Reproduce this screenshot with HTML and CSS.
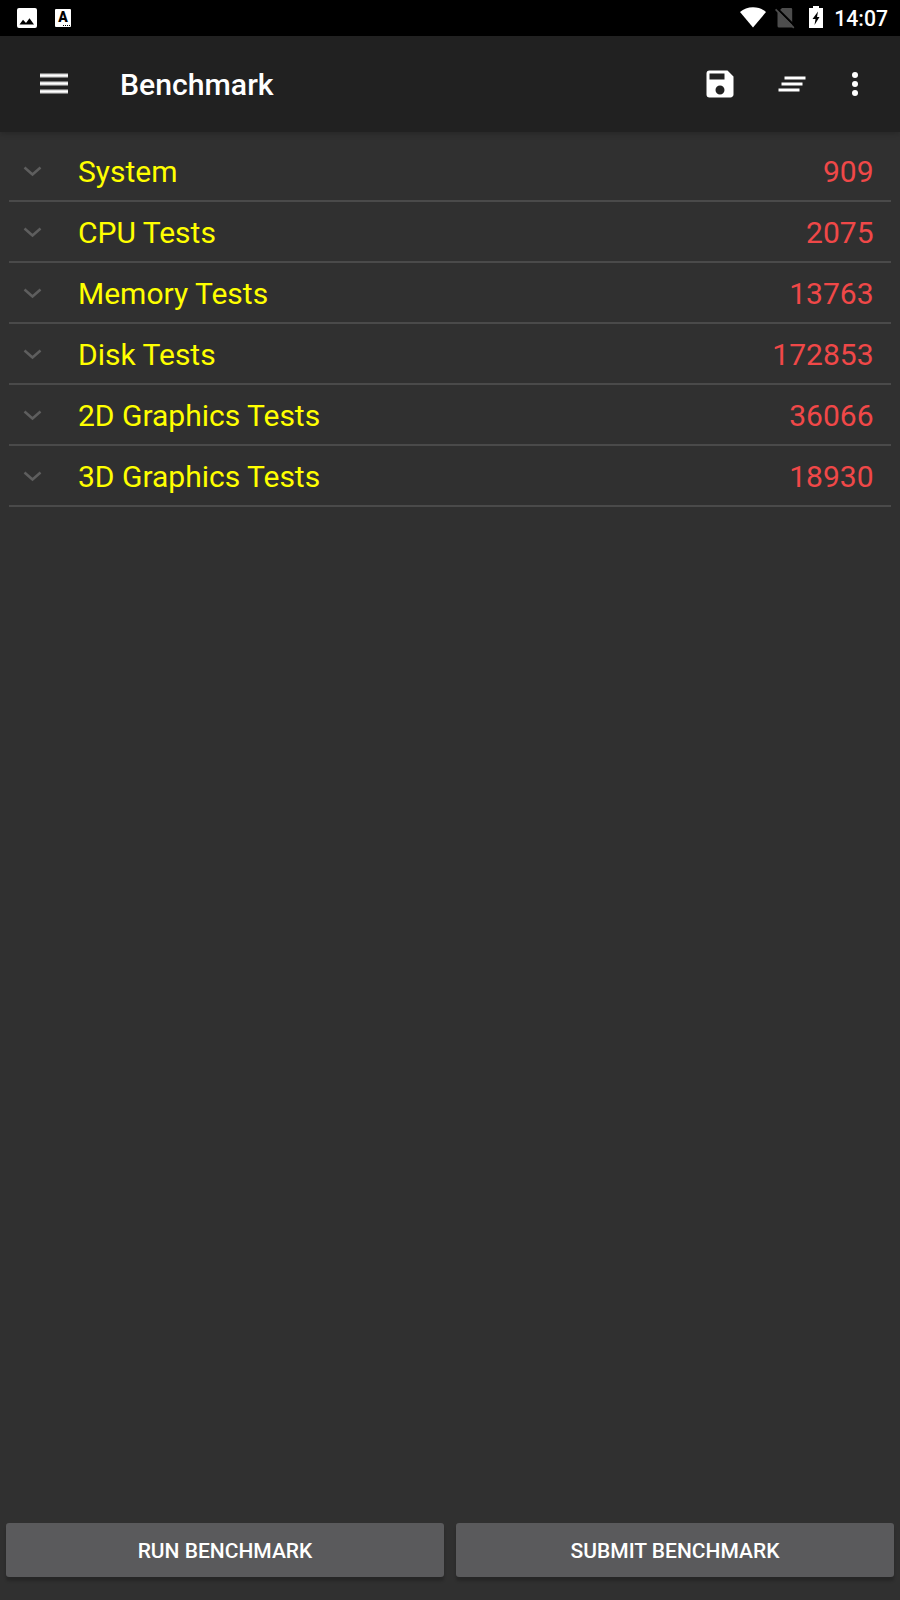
FILE: index.html
```html
<!DOCTYPE html>
<html lang="en">
<head>
  <meta charset="UTF-8">
  <meta name="viewport" content="width=device-width, initial-scale=1.0">
  <title>Benchmark</title>
  <link rel="stylesheet" href="styles.css">
</head>
<body>
  <div class="status-bar">
    <svg class="status-image" width="20" height="20" viewBox="0 0 20 20">
      <path fill="#fff" fill-rule="evenodd" d="M2 0h16a2 2 0 0 1 2 2v16a2 2 0 0 1-2 2H2a2 2 0 0 1-2-2V2a2 2 0 0 1 2-2zM2.500 16.500h14.500L12.500 10.300 9 15 6 11.800z"/>
    </svg>
    <div class="status-app">A<span class="dots"></span></div>
    <div class="status-right">
      <svg class="wifi" width="26" height="21" viewBox="0 0 26 21">
        <path fill="#fff" d="M13 20.500L0 5C3.500 2 8 0.300 13 0.300S22.500 2 26 5z"/>
      </svg>
      <svg class="sim" width="20" height="21" viewBox="0 0 20 21">
        <path fill="#4d4d4d" d="M7 0h9a1.200 1.200 0 0 1 1.200 1.200V19.500H4a1.500 1.500 0 0 1-1.500-1.500V4.500z"/>
        <path stroke="#000" stroke-width="2" d="M2 0.200L20 18.200"/>
        <path stroke="#4d4d4d" stroke-width="1.700" d="M0.600 1.400L18.800 19.800"/>
      </svg>
      <svg class="battery" width="14" height="22" viewBox="0 0 14 22">
        <path fill="#fff" d="M4 0h6v2h4v20H0V2h4z"/>
        <path fill="#000" d="M9 5.500L3.500 13h3L5.500 19 10.500 11H8z"/>
      </svg>
      <span class="clock">14:07</span>
    </div>
  </div>

  <header class="app-bar">
    <svg class="menu" width="28" height="22" viewBox="0 0 28 22">
      <path fill="#7a7a7a" d="M0 0h28v5H0zM0 8h28v5H0zM0 16h28v5H0z"/>
      <path fill="#fff" d="M0 1.200h28v2.600H0zM0 9.200h28v2.600H0zM0 17.200h28v2.600H0z"/>
    </svg>
    <h1>Benchmark</h1>
    <svg class="action save" width="36" height="36" viewBox="0 0 24 24">
      <path fill="#fff" d="M17 3H5a2 2 0 0 0-2 2v14a2 2 0 0 0 2 2h14c1.100 0 2-.9 2-2V7l-4-4zm-5 16a3 3 0 1 1 0-6 3 3 0 0 1 0 6zm3-10H5V5h10v4z"/>
    </svg>
    <svg class="action clear" width="36" height="36" viewBox="0 0 24 24">
      <path fill="#fff" d="M5 13h14v-2H5v2zm-2 4h14v-2H3v2zM7 7v2h14V7H7z"/>
    </svg>
    <svg class="action more" width="36" height="36" viewBox="0 0 24 24">
      <g fill="#fff">
        <circle cx="12" cy="6" r="2"/>
        <circle cx="12" cy="12" r="2"/>
        <circle cx="12" cy="18" r="2"/>
      </g>
    </svg>
  </header>

  <main class="results">
    <div class="row">
      <svg class="chevron" width="20" height="12" viewBox="0 0 20 12"><path d="M1.500 1.500L9.500 8.500L17.500 1.500"/></svg>
      <span class="name">System</span>
      <span class="score">909</span>
    </div>
    <div class="row">
      <svg class="chevron" width="20" height="12" viewBox="0 0 20 12"><path d="M1.500 1.500L9.500 8.500L17.500 1.500"/></svg>
      <span class="name">CPU Tests</span>
      <span class="score">2075</span>
    </div>
    <div class="row">
      <svg class="chevron" width="20" height="12" viewBox="0 0 20 12"><path d="M1.500 1.500L9.500 8.500L17.500 1.500"/></svg>
      <span class="name">Memory Tests</span>
      <span class="score">13763</span>
    </div>
    <div class="row">
      <svg class="chevron" width="20" height="12" viewBox="0 0 20 12"><path d="M1.500 1.500L9.500 8.500L17.500 1.500"/></svg>
      <span class="name">Disk Tests</span>
      <span class="score">172853</span>
    </div>
    <div class="row">
      <svg class="chevron" width="20" height="12" viewBox="0 0 20 12"><path d="M1.500 1.500L9.500 8.500L17.500 1.500"/></svg>
      <span class="name">2D Graphics Tests</span>
      <span class="score">36066</span>
    </div>
    <div class="row">
      <svg class="chevron" width="20" height="12" viewBox="0 0 20 12"><path d="M1.500 1.500L9.500 8.500L17.500 1.500"/></svg>
      <span class="name">3D Graphics Tests</span>
      <span class="score">18930</span>
    </div>
  </main>

  <footer class="buttons">
    <button type="button">RUN BENCHMARK</button>
    <button type="button">SUBMIT BENCHMARK</button>
  </footer>
</body>
</html>
```
FILE: styles.css
```css
* {
  box-sizing: border-box;
}

body {
  margin: 0;
  height: 100vh;
  display: flex;
  flex-direction: column;
  background-color: #303030;
  color: #fff;
  font-family: Roboto, sans-serif;
}

svg {
  display: block;
  flex: none;
}

/* Status bar */
.status-bar {
  height: 36px;
  flex: none;
  display: flex;
  align-items: flex-start;
  background-color: #000;
}

.status-image {
  margin: 8px 0 0 17px;
}

.status-app {
  position: relative;
  width: 16px;
  height: 18px;
  margin: 9px 0 0 18px;
  border-radius: 1px;
  background-color: #fff;
  color: #000;
  font-size: 14px;
  font-weight: 900;
  line-height: 17px;
  text-align: center;
}

.status-app .dots {
  position: absolute;
  right: 1px;
  bottom: 1px;
  width: 7px;
  border-bottom: 1px dotted #000;
}

.status-right {
  margin-left: auto;
  padding-right: 12px;
  display: flex;
}

.wifi {
  margin: 7px 9px 0 0;
}

.sim {
  margin: 8px 14px 0 0;
}

.battery {
  margin: 6px 11px 0 0;
}

.clock {
  font-size: 21.2px;
  font-weight: 500;
  line-height: 38px;
}

/* App bar */
.app-bar {
  height: 96px;
  flex: none;
  display: flex;
  align-items: center;
  padding: 0 27px 0 40px;
  background-color: #212121;
  box-shadow: 0 2px 6px rgba(0, 0, 0, 0.2);
}

h1 {
  flex: 1;
  margin: 0 0 0 52px;
  font-size: 30.2px;
  font-weight: 500;
}

.clear {
  margin: 0 27px 0 36px;
}

/* Results */
.results {
  flex: 1;
  padding: 9px 9px 0;
}

.row {
  height: 61px;
  display: flex;
  align-items: center;
  padding: 2px 17.5px 0 14px;
  border-bottom: 2px solid #4a4a4a;
  font-size: 30px;
}

.chevron {
  margin-top: 1px;
  fill: none;
  stroke: #5e5e5e;
  stroke-width: 2.5;
}

.name {
  flex: 1;
  margin-left: 35px;
  color: #ff0;
}

.score {
  color: #f04848;
}

/* Bottom buttons */
.buttons {
  flex: none;
  display: flex;
  gap: 12px;
  padding: 0 6px 23px;
}

button {
  flex: 1;
  height: 54px;
  padding: 2px 0 0;
  border: none;
  border-radius: 3px;
  background-color: #5a5a5c;
  color: #fff;
  font-family: inherit;
  font-size: 21px;
  font-weight: 500;
  box-shadow: 0 4px 3px rgba(0, 0, 0, 0.2);
}
```
